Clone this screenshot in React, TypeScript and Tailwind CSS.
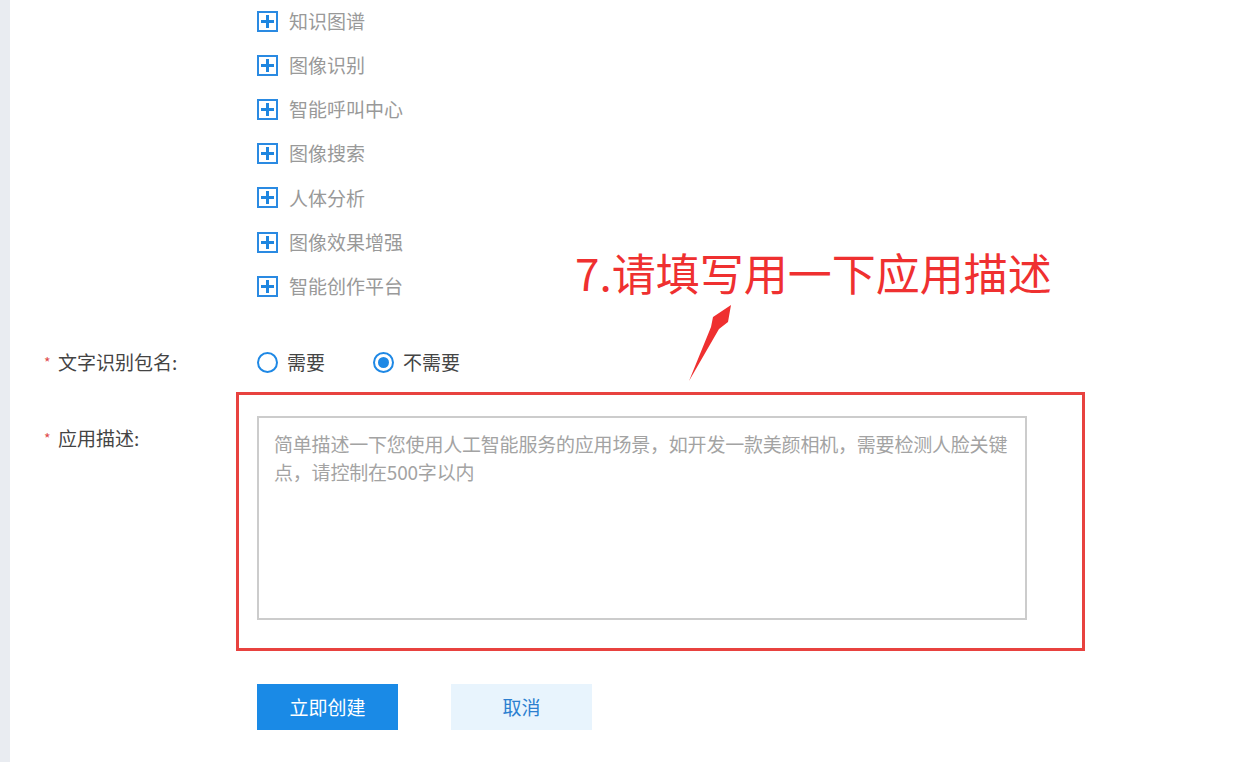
import React from 'react';

const services = ['知识图谱', '图像识别', '智能呼叫中心', '图像搜索', '人体分析', '图像效果增强', '智能创作平台'];

const PlusBox = () => (
  <span className="flex h-[21px] w-[21px] items-center justify-center border-2 border-[#2a8ae2] bg-white">
    <svg width="13" height="13" viewBox="0 0 13 13">
      <rect x="5" y="0" width="3" height="13" fill="#1e86e0" />
      <rect x="0" y="5" width="13" height="3" fill="#1e86e0" />
    </svg>
  </span>
);

const Radio = ({ checked, label }: { checked?: boolean; label: string }) => (
  <label className="flex items-center gap-[9px]">
    <span className="flex h-[21px] w-[21px] items-center justify-center rounded-full border-2 border-[#1e88e5] bg-white">
      {checked && <span className="h-[11px] w-[11px] rounded-full bg-[#1e88e5]" />}
    </span>
    <span className="text-[19px] text-[#444]">{label}</span>
  </label>
);

const Label = ({ text, className = '' }: { text: string; className?: string }) => (
  <div className={`flex w-[213px] shrink-0 items-start leading-[28px] ${className}`}>
    <span className="w-[14px] text-[14px] text-[#e04b4b]">*</span>
    <span className="text-[19px] text-[#444]">{text}</span>
  </div>
);

export default function App() {
  return (
    <div
      className="relative flex h-[762px] w-[1240px] overflow-hidden bg-white"
      style={{ fontFamily: '"Noto Sans CJK SC", "Noto Sans", sans-serif' }}
    >
      <div className="w-[10px] shrink-0 bg-[#e9ecf1]" />
      <div className="flex-1 pl-[34px]">
        {/* service list */}
        <div className="-mt-[1px] ml-[213px] flex flex-col">
          {services.map((s) => (
            <div key={s} className="flex h-[44.2px] items-center gap-[11px]">
              <PlusBox />
              <span className="text-[19px] text-[#999]">{s}</span>
            </div>
          ))}
        </div>

        {/* package name */}
        <div className="mt-[34px] flex h-[40px] items-center">
          <Label text="文字识别包名:" />
          <div className="flex items-center gap-[48px]">
            <Radio label="需要" />
            <Radio checked label="不需要" />
          </div>
        </div>

        {/* description */}
        <div className="mt-[34px] flex">
          <Label text="应用描述:" className="pt-[8px]" />
          <div className="h-[204px] w-[770px] border-2 border-[#cccccc] px-[15px] pt-[12px]">
            <p className="text-[19px] leading-[28px] tracking-[-0.2px] text-[#a3a3a3]">
              简单描述一下您使用人工智能服务的应用场景，如开发一款美颜相机，需要检测人脸关键点，请控制在500字以内
            </p>
          </div>
        </div>

        {/* buttons */}
        <div className="mt-[64px] ml-[213px] flex gap-[53px]">
          <button className="h-[46px] w-[141px] bg-[#1a8ae6] text-[19px] text-white">立即创建</button>
          <button className="h-[46px] w-[141px] bg-[#e8f4fd] text-[19px] text-[#2c7fd0]">取消</button>
        </div>
      </div>

      {/* annotation overlay */}
      <div className="pointer-events-none absolute left-[236px] top-[392px] h-[259px] w-[849px] border-[3px] border-[#e8423f]" />
      <div className="pointer-events-none absolute left-[575px] top-[242px] text-[44px] leading-[60px] text-[#ef3030]">
        7.请填写用一下应用描述
      </div>
      <svg className="pointer-events-none absolute left-0 top-0" width="1240" height="762" viewBox="0 0 1240 762">
        <polygon points="689,381 711,327 713,317 731,305 728,322 719,329" fill="#ef3030" />
      </svg>
    </div>
  );
}
